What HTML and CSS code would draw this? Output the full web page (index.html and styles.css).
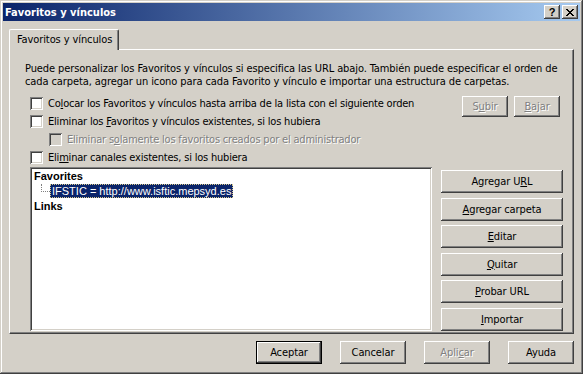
FILE: index.html
```html
<!DOCTYPE html>
<html>
<head>
  <meta charset="utf-8">
  <link rel="stylesheet" href="styles.css">
</head>
<body>
  <div class="window">
    <div class="titlebar">
      <span class="title">Favoritos y vínculos</span>
      <div class="cap-btns">
        <span class="cap-btn">?</span>
        <span class="cap-btn">
          <svg width="8" height="7" viewBox="0 0 8 7" shape-rendering="crispEdges">
            <rect x="0" y="0" width="2" height="1"/><rect x="6" y="0" width="2" height="1"/>
            <rect x="1" y="1" width="2" height="1"/><rect x="5" y="1" width="2" height="1"/>
            <rect x="2" y="2" width="4" height="1"/>
            <rect x="3" y="3" width="2" height="1"/>
            <rect x="2" y="4" width="4" height="1"/>
            <rect x="1" y="5" width="2" height="1"/><rect x="5" y="5" width="2" height="1"/>
            <rect x="0" y="6" width="2" height="1"/><rect x="6" y="6" width="2" height="1"/>
          </svg>
        </span>
      </div>
    </div>

    <div class="client">
      <div class="tabs">
        <div class="tab">Favoritos y vínculos</div>
      </div>

      <div class="panel">
        <p class="intro">Puede personalizar los Favoritos y vínculos si especifica las URL abajo. También puede especificar el orden de<br>cada carpeta, agregar un icono para cada Favorito y vínculo e importar una estructura de carpetas.</p>

        <div class="options">
          <div class="checks">
            <div class="check"><span class="box"></span><span>Co<u>l</u>ocar los Favoritos y vínculos hasta arriba de la lista con el siguiente orden</span></div>
            <div class="check"><span class="box"></span><span>Eliminar los <u>F</u>avoritos y vínculos existentes, si los hubiera</span></div>
            <div class="check sub disabled"><span class="box"></span><span>Eliminar s<u>o</u>lamente los favoritos creados por el administrador</span></div>
            <div class="check"><span class="box"></span><span>Eli<u>m</u>inar canales existentes, si los hubiera</span></div>
          </div>
          <div class="order-btns">
            <button class="btn small disabled">S<u>u</u>bir</button>
            <button class="btn small disabled"><u>B</u>ajar</button>
          </div>
        </div>

        <div class="main">
          <div class="tree">
            <div class="node root">Favorites</div>
            <div class="node child"><span class="branch"></span><span class="selected">IFSTIC = http://www.isftic.mepsyd.es</span></div>
            <div class="node root">Links</div>
          </div>
          <div class="side-btns">
            <button class="btn">Agregar U<u>R</u>L</button>
            <button class="btn"><u>A</u>gregar carpeta</button>
            <button class="btn"><u>E</u>ditar</button>
            <button class="btn"><u>Q</u>uitar</button>
            <button class="btn"><u>P</u>robar URL</button>
            <button class="btn"><u>I</u>mportar</button>
          </div>
        </div>
      </div>

      <div class="footer">
        <button class="btn wide default">Aceptar</button>
        <button class="btn wide">Cancelar</button>
        <button class="btn wide disabled">Apli<u>c</u>ar</button>
        <button class="btn wide">Ayuda</button>
      </div>
    </div>
  </div>
</body>
</html>
```

FILE: styles.css
```css
body {
  margin: 0;
  font-family: "DejaVu Sans Condensed", "Liberation Sans", sans-serif;
  font-size: 11px;
  letter-spacing: -0.1px;
  color: #000;
  background: #d4d0c8;
}

u {
  text-decoration: underline;
  text-underline-offset: 1px;
}

.window {
  width: 583px;
  height: 374px;
  box-sizing: border-box;
  padding: 3px;
  background: #d4d0c8;
  box-shadow: inset -1px -1px #404040, inset 1px 1px #d4d0c8, inset -2px -2px #808080, inset 2px 2px #fff;
  display: flex;
  flex-direction: column;
}

/* title bar */
.titlebar {
  height: 18px;
  flex-shrink: 0;
  display: flex;
  align-items: center;
  justify-content: space-between;
  padding: 0 2px;
  background: linear-gradient(to right, #0a246a, #a6caf0);
  color: #fff;
  font-weight: bold;
  letter-spacing: 0;
}

.cap-btns {
  display: flex;
  gap: 2px;
}

.cap-btn {
  width: 16px;
  height: 14px;
  box-sizing: border-box;
  display: flex;
  align-items: center;
  justify-content: center;
  background: #d4d0c8;
  color: #000;
  font-family: "Liberation Sans", sans-serif;
  font-size: 11px;
  font-weight: bold;
  box-shadow: inset -1px -1px #404040, inset 1px 1px #fff, inset -2px -2px #808080, inset 2px 2px #d4d0c8;
}

.cap-btn svg {
  fill: #000;
}

/* client area */
.client {
  flex: 1;
  padding: 8px 6px 0;
  display: flex;
  flex-direction: column;
}

.tabs {
  display: flex;
  height: 21px;
  margin-bottom: -1px;
  position: relative;
  z-index: 1;
}

.tab {
  width: 110px;
  box-sizing: border-box;
  padding-left: 7px;
  line-height: 19px;
  background: #d4d0c8;
  border-top: 1px solid #fff;
  border-left: 1px solid #fff;
  border-right: 1px solid #404040;
  border-top-left-radius: 2px;
  border-top-right-radius: 2px;
  box-shadow: inset -1px 0 #808080;
}

.panel {
  height: 285px;
  box-sizing: border-box;
  border-top: 1px solid #fff;
  border-left: 1px solid #fff;
  border-right: 1px solid #404040;
  border-bottom: 1px solid #404040;
  box-shadow: inset -1px -1px #808080;
  padding: 12px 10px 0 15px;
}

.intro {
  margin: 0;
  line-height: 13px;
  white-space: nowrap;
}

/* checkboxes */
.options {
  display: flex;
  justify-content: space-between;
  margin: 6px 0 0 5px;
}

.check {
  display: flex;
  align-items: center;
  gap: 5px;
  height: 18px;
  white-space: nowrap;
  letter-spacing: -0.2px;
}

.check.sub {
  padding-left: 19px;
}

.box {
  width: 13px;
  height: 13px;
  flex-shrink: 0;
  box-sizing: border-box;
  background: #fff;
  box-shadow: inset 1px 1px #808080, inset -1px -1px #fff, inset 2px 2px #404040, inset -2px -2px #d4d0c8;
}

.disabled {
  color: #808080;
  text-shadow: 1px 1px #fff;
}

.check.disabled .box {
  background: #d4d0c8;
}

.order-btns {
  display: flex;
  gap: 6px;
  margin: 2px 3px 0 0;
}

/* buttons */
.btn {
  font: inherit;
  letter-spacing: inherit;
  color: #000;
  background: #d4d0c8;
  border: none;
  padding: 0;
  height: 23px;
  box-sizing: border-box;
  box-shadow: inset -1px -1px #404040, inset 1px 1px #fff, inset -2px -2px #808080, inset 2px 2px #d4d0c8;
  cursor: default;
}

.btn.disabled {
  color: #808080;
  text-shadow: 1px 1px #fff;
}

.btn.small {
  width: 46px;
  height: 21px;
}

.btn.wide {
  width: 66px;
}

.btn.default {
  border: 1px solid #000;
}

/* tree + side buttons */
.main {
  display: flex;
  margin: 1px 0 0 5px;
}

.tree {
  width: 402px;
  height: 164px;
  box-sizing: border-box;
  padding: 2px 4px;
  background: #fff;
  box-shadow: inset 1px 1px #808080, inset -1px -1px #fff, inset 2px 2px #404040, inset -2px -2px #d4d0c8;
  font-family: "Liberation Sans", sans-serif;
  letter-spacing: 0;
}

.node {
  height: 15px;
  line-height: 15px;
  display: flex;
  align-items: center;
}

.node.root {
  font-weight: bold;
}

.node.child {
  align-items: flex-start;
}

.branch {
  width: 8px;
  height: 7px;
  margin-left: 7px;
  border-left: 1px dotted #808080;
  border-bottom: 1px dotted #808080;
}

.selected {
  height: 14px;
  line-height: 14px;
  padding: 0 2px;
  background: #0a246a;
  color: #fff;
  outline: 1px dotted #d8c88a;
  outline-offset: -1px;
}

.side-btns {
  width: 122px;
  margin: 3px 0 0 9px;
  display: flex;
  flex-direction: column;
  gap: 4.6px;
}

/* footer */
.footer {
  display: flex;
  justify-content: flex-end;
  gap: 18px;
  margin-top: 7px;
}
```
